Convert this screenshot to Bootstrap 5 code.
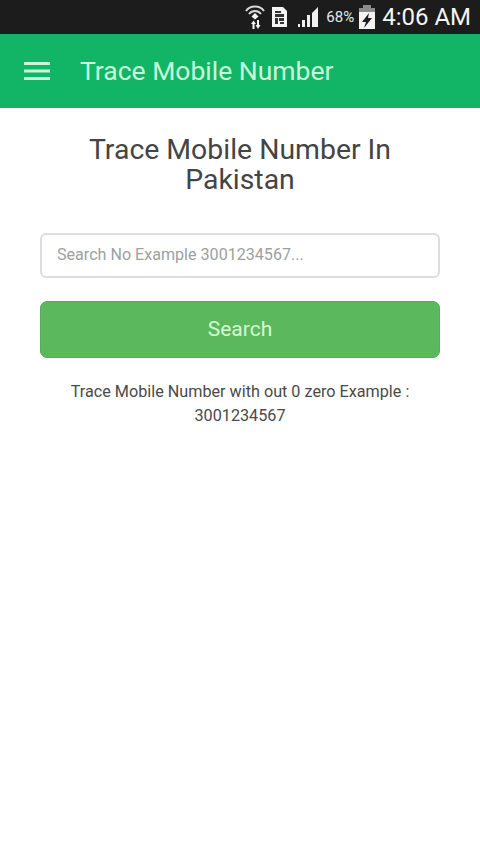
<!doctype html>
<html lang="en">
<head>
<meta charset="utf-8">
<meta name="viewport" content="width=device-width, initial-scale=1">
<link href="https://cdn.jsdelivr.net/npm/bootstrap@5.3.0/dist/css/bootstrap.min.css" rel="stylesheet">
<style>
html,body{background:#fff;height:100%}
body{font-family:Roboto,"Liberation Sans",sans-serif;color:#333;overflow:hidden}
.status-strip{height:34px;background:#1c1c1c;color:#f4f4f4;padding-right:9px}
.status-pct{font-size:15px;line-height:1;color:#e8e8e8;margin-left:7px;margin-right:4px}
.status-time{font-size:24px;line-height:1;margin-left:6px}
.app-head{height:74px;background:#12b566;padding-left:24px}
.app-title{font-size:26.500px;line-height:1;margin-left:30px;color:#c8f8dc;font-weight:400}
.page-title{font-size:28.400px;line-height:30px;font-weight:400;color:#444;margin:27px 0 0;text-align:center;padding:0 60px}
.search-box{margin:38px 40px 0}
.search-box .form-control{height:45px;border:2px solid #ddd;border-radius:6px;font-size:16.100px;padding:0 15px 2px;color:#555;box-shadow:none}
.search-box .form-control::placeholder{color:#a0a0a0;opacity:1}
.go-btn{display:block;width:100%;height:57px;margin-top:23px;background:#5cb85c;border:1px solid #55ad55;border-radius:7px;color:#d6f8d2;font-size:21px}
.help-note{font-size:16.200px;line-height:24px;color:#4a4a4a;margin:22px 40px 0;text-align:center}
.wifi-mark{margin-right:6px}
.sim-mark{margin-right:9px}
</style>
</head>
<body>
<div class="status-strip d-flex align-items-center justify-content-end">
  <svg class="wifi-mark" width="20" height="26" viewBox="0 0 20 26" aria-hidden="true"><g fill="none" stroke="#d8d8d8" stroke-width="2"><path d="M1 7C5 1 15 1 19 7"/><path d="M4 10C7 6 13 6 16 10"/></g><path d="M10 9l3.500 3.500-3.500 3-3.500-3z" fill="#f4f4f4"/><path d="M6 20l2.500-3.500L11 20H9.500v5h-2v-5zM10.500 21h1.500v-5h2v5h1.500L13 25z" fill="#f4f4f4"/></svg>
  <svg class="sim-mark" width="17" height="22" viewBox="0 0 17 22" aria-hidden="true"><path d="M1 1h11l4 4v16H1z" fill="#f4f4f4"/><path d="M4 5h6v2H4zM4 8h9v3H4zM4 12h3v6H4zM8 12h5v3H8zM9 16h4v2H9z" fill="#333"/></svg>
  <svg width="22" height="24" viewBox="0 0 22 24" aria-hidden="true"><path d="M1 22h2v-3H1zM5 22h3v-7H5zM10 22h3V10h-3zM15 22h6V2l-6 6z" fill="#f0f0f0"/></svg>
  <span class="status-pct">68%</span>
  <svg width="18" height="26" viewBox="0 0 18 26" aria-hidden="true"><path d="M5 1h8v3h4v21H1V4h4z" fill="#8c8c8c"/><path d="M1 8h16v17H1z" fill="#f4f4f4"/><path d="M11 9L4 18h4l-2 6 8-10h-4z" fill="#1c1c1c"/></svg>
  <span class="status-time">4:06 AM</span>
</div>
<header class="app-head d-flex align-items-center">
  <svg width="26" height="18" viewBox="0 0 26 18" aria-hidden="true"><path d="M0 1.500h26M0 9h26M0 16.500h26" stroke="#c8f8dc" stroke-width="3"/></svg>
  <h1 class="app-title mb-0">Trace Mobile Number</h1>
</header>
<main>
  <h2 class="page-title">Trace Mobile Number In Pakistan</h2>
  <form class="search-box" onsubmit="return false">
    <input class="form-control" type="text" placeholder="Search No Example 3001234567...">
    <button class="btn go-btn" type="button">Search</button>
  </form>
  <p class="help-note">Trace Mobile Number with out 0 zero Example : 3001234567</p>
</main>
<script src="https://cdn.jsdelivr.net/npm/bootstrap@5.3.0/dist/js/bootstrap.bundle.min.js"></script>
</body>
</html>
